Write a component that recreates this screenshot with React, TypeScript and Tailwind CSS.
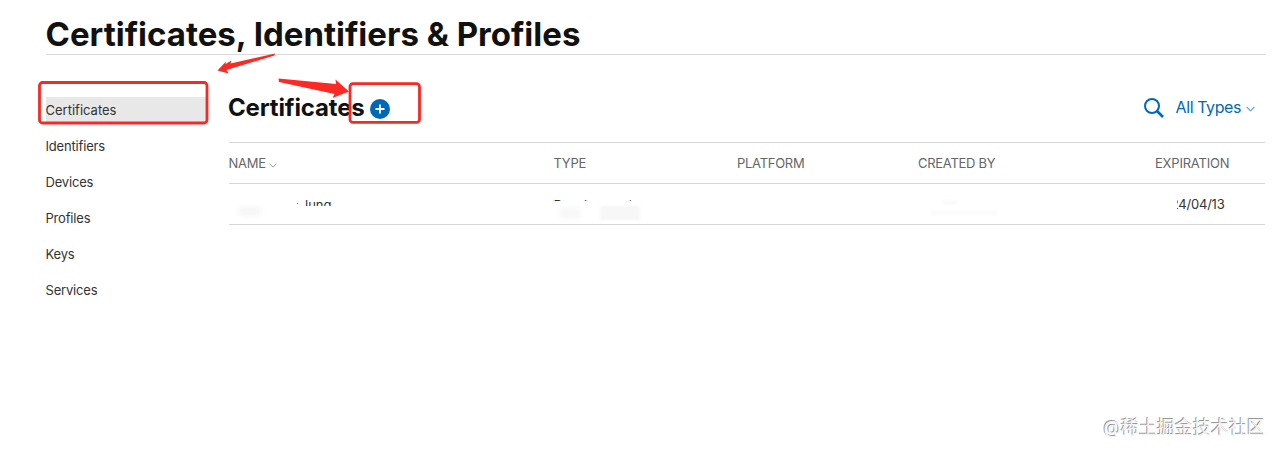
const navItems = ["Certificates", "Identifiers", "Devices", "Profiles", "Keys", "Services"];

const rowGrid = "grid h-[41px] grid-cols-[325px_183px_181px_237px_1fr] items-center border-b border-[#d6d6d6]";

function Chevron({ className }: { className: string }) {
  return (
    <svg viewBox="0 0 10 6" fill="none" stroke="currentColor" className={className}>
      <path d="M1 1l4 4 4-4" strokeWidth="1.200" strokeLinecap="round" strokeLinejoin="round" />
    </svg>
  );
}

function Sidebar() {
  return (
    <nav className="mt-[42px] flex w-[162px] shrink-0 flex-col text-[13px] text-[#333]">
      {navItems.map((item, i) => (
        <a
          key={item}
          className={
            i === 0
              ? "mb-[5px] flex h-[27px] items-center bg-[#e8e8e8] pt-px"
              : "flex h-9 items-center tracking-[-0.18px]"
          }
        >
          <span className="-ml-[0.5px]">{item}</span>
        </a>
      ))}
    </nav>
  );
}

function CertificateTable() {
  return (
    <div className="text-[13px] tracking-[-0.2px]">
      <div className={`${rowGrid} pt-0.5 text-[#666] tracking-[-0.28px]`}>
        <span className="-ml-[0.5px] flex items-center gap-[3px]">
          NAME
          <Chevron className="mt-[3px] h-[5px] w-2 text-[#999]" />
        </span>
        <span className="-ml-[0.5px]">TYPE</span>
        <span>PLATFORM</span>
        <span>CREATED BY</span>
        <span className="tracking-[-0.2px]">EXPIRATION</span>
      </div>
      {/* Most of the row is masked, only slivers of the values show */}
      <div className={`${rowGrid} relative text-[#333]`}>
        <span className="mt-0.5 pl-[76px] leading-5 tracking-normal [clip-path:inset(4px_0_9px_0)]">lung</span>
        <span className="mt-0.5 -ml-[0.5px] leading-5 [clip-path:inset(0_0_14px_0)]">Development</span>
        <span />
        <span />
        <span className="leading-5 [clip-path:inset(0_0_0_22px)]">2024/04/13</span>
        <i className="absolute left-[68px] top-[19px] size-px bg-[#777]" />
        <i className="absolute left-[10px] top-[23px] h-[9px] w-[22px] bg-[#f6f6f6] blur-[2px]" />
        <i className="absolute left-[331px] top-[23px] h-[12px] w-[20px] bg-[#f8f8f8] blur-[2px]" />
        <i className="absolute left-[371px] top-[22px] h-[14px] w-[40px] bg-[#f7f7f7] blur-[1px]" />
        <i className="absolute left-[714px] top-[16px] h-[5px] w-[14px] bg-[#fafafa] blur-[1px]" />
        <i className="absolute left-[702px] top-[26px] h-[5px] w-[66px] bg-[#fcfcfc] blur-[1px]" />
      </div>
    </div>
  );
}

function Annotations() {
  return (
    <svg
      viewBox="0 0 1279 452"
      fill="none"
      className="pointer-events-none absolute left-0 top-0 h-[452px] w-[1279px]"
    >
      <g stroke="#f42a26" strokeWidth="2.800">
        <rect x="39.5" y="82.5" width="167.5" height="40.5" rx="3" />
        <rect x="350" y="83.7" width="69.5" height="38.7" rx="3" />
      </g>
      <g fill="#fb2a24">
        <path d="M275 53.500L274.500 55.500L226.500 70L228.500 73.500L217.500 70.500L226 61.500L225.500 64L231.500 60.500L230.500 63.500Z" />
        <path d="M278.500 78.500L336 84L335.500 79.500L349 91.500L332.500 98L334.500 94L279 82Z" />
      </g>
    </svg>
  );
}

export default function App() {
  return (
    <main className="relative h-[452px] w-[1279px] overflow-hidden bg-white font-['Inter','Noto_Sans_CJK_SC',sans-serif] text-[#111]">
      <header className="ml-[46px] mr-[13px] flex h-[55px] items-end border-b border-[#d9d9d9]">
        <h1 className="-ml-[0.5px] text-[33px] font-bold leading-10">
          Certificates, Identifiers &amp; Profiles
        </h1>
      </header>

      <div className="ml-[46px] mr-[14px] flex gap-[21px]">
        <Sidebar />
        <section className="min-w-0 flex-1">
          <div className="flex h-[88px] items-end justify-between border-b border-[#d6d6d6] pb-[18px]">
            <div className="flex items-center">
              <h2 className="-ml-px w-[142px] text-2xl font-bold leading-8 tracking-[-0.15px]">Certificates</h2>
              <svg viewBox="0 0 20 20" className="mt-0.5 size-5">
                <circle cx="10" cy="10" r="10" fill="#0068b8" />
                <path d="M10 5.500v9M5.500 10h9" stroke="#fff" strokeWidth="1.800" />
              </svg>
            </div>
            <div className="mb-[5px] flex items-center pr-[10px] text-base text-[#0068b8]">
              <svg viewBox="0 0 20 20" fill="none" stroke="currentColor" className="mr-3 mt-0.5 size-5">
                <circle cx="8" cy="8" r="7" strokeWidth="2" />
                <path d="M13 13l6 6" strokeWidth="2.600" />
              </svg>
              <span className="tracking-[-0.42px]">All Types</span>
              <Chevron className="ml-[5px] mt-1 h-[6px] w-[9px] text-[#5b9bd0]" />
            </div>
          </div>
          <CertificateTable />
        </section>
      </div>

      <Annotations />
      <p className="absolute bottom-[12px] right-[14px] text-lg leading-6 text-[#f4f4f4] [text-shadow:-1px_-1px_0_#999]">
        @稀土掘金技术社区
      </p>
    </main>
  );
}
